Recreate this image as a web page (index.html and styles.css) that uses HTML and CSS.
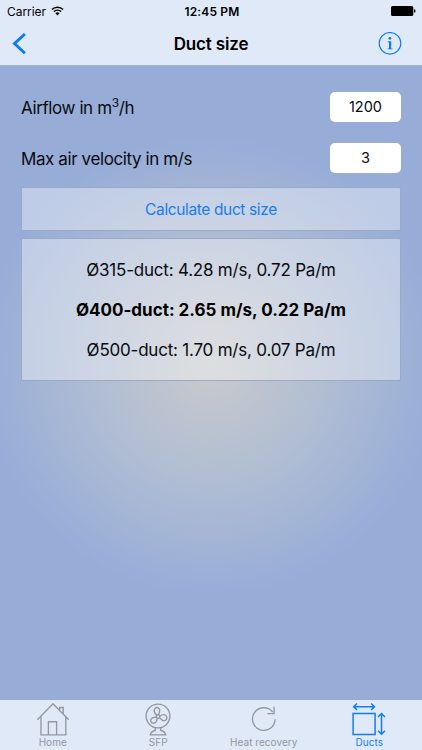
FILE: index.html
```html
<!DOCTYPE html>
<html lang="en">

<head>
    <meta charset="UTF-8">
    <meta name="viewport" content="width=device-width, initial-scale=1">
    <title>Duct size</title>
    <link rel="stylesheet" href="styles.css">
</head>

<body>

    <div class="app">
        <header class="header">
            <div class="status-bar">
                <div class="carrier">
                    <span>Carrier</span>
                    <svg class="wifi" viewBox="0 0 13 10" width="13" height="10">
                        <path d="M.9 3.5a8 8 0 0 1 11.2 0M2.9 5.6a5.2 5.2 0 0 1 7.2 0" fill="none" stroke="#000" stroke-width="1.5"/>
                        <path d="M6.5 9.4 4.4 7.3a3 3 0 0 1 4.2 0z"/>
                    </svg>
                </div>
                <div class="time">12:45 PM</div>
                <svg class="battery" viewBox="0 0 25 10" width="25" height="10">
                    <rect width="22.3" height="10" rx="1.6"/>
                    <path d="M23 3.2q1.6.3 1.6 1.8T23 6.8z"/>
                </svg>
            </div>
            <div class="nav-bar">
                <a href="#" class="back" aria-label="Back">
                    <svg viewBox="0 0 14 22" width="14" height="22">
                        <path d="M12.9 1 2.4 10.6l10.5 9.7" fill="none" stroke="currentColor" stroke-width="2.8"/>
                    </svg>
                </a>
                <h1 class="title">Duct size</h1>
                <a href="#" class="info" aria-label="Info">
                    <svg viewBox="0 0 24 24" width="24" height="24">
                        <circle cx="12" cy="11.3" r="10.8" fill="none" stroke="currentColor" stroke-width="1.1"/>
                        <circle cx="11.9" cy="6.3" r="1.4" fill="currentColor"/>
                        <path d="M9.7 9.3h3.5v7.1h1.4v.9H9.6v-.9H11v-6.2H9.7z" fill="currentColor"/>
                    </svg>
                </a>
            </div>
        </header>

        <main class="content">
            <div class="field">
                <label for="airflow">Airflow in m<sup>3</sup>/h</label>
                <input type="text" id="airflow" value="1200">
            </div>
            <div class="field">
                <label for="velocity">Max air velocity in m/s</label>
                <input type="text" id="velocity" value="3">
            </div>
            <button class="calculate">Calculate duct size</button>
            <div class="results">
                <div class="result">Ø315-duct: 4.28 m/s, 0.72 Pa/m</div>
                <div class="result best">Ø400-duct: 2.65 m/s, 0.22 Pa/m</div>
                <div class="result">Ø500-duct: 1.70 m/s, 0.07 Pa/m</div>
            </div>
        </main>

        <nav class="tab-bar">
            <a href="#" class="tab">
                <svg viewBox="0 0 36 36" width="36" height="36">
                    <path d="M2.4 18.8 18 2.8l15.7 16M6 15.2v18.6h24.8V15.2M13.4 33.8V20.7h8.2v13.1M24.7 8.7V6.5h3.5v6"/>
                </svg>
                <span>Home</span>
            </a>
            <a href="#" class="tab">
                <svg viewBox="0 0 36 36" width="36" height="36">
                    <circle cx="18" cy="15" r="11.9"/>
                    <circle cx="18" cy="15.5" r="1.8"/>
                    <path d="M16.6 14.2c-2.2-2.3-3.2-5-1.5-6.8 2-1.8 4.8-.4 4.6 2.4-.1 1.8-1 2.6-1.2 3.9M19.7 15.1c2.7-1.8 5.4-1.7 6.7.1 1.3 2.3-.4 4.8-2.9 4.4-2-.3-2.4-1.8-4-2.8M17.2 17.1c-.2 3-1.7 5.3-4 5.1-2.7-.3-3.3-3.3-1.3-4.9 1.5-1.2 2.9-.6 4.3-1.2M15.2 26.7v2.8c-2.8.6-4.6 2-4.9 4.4h15.4c-.3-2.4-2.1-3.8-4.9-4.4v-2.8"/>
                </svg>
                <span>SFP</span>
            </a>
            <a href="#" class="tab">
                <svg viewBox="0 0 36 36" width="36" height="36">
                    <path d="M29.1 18.2A11.3 11.3 0 1 1 26.8 11.2M28.1 5.7v6.9h-6.7"/>
                </svg>
                <span>Heat recovery</span>
            </a>
            <a href="#" class="tab active">
                <svg viewBox="0 0 36 36" width="36" height="36">
                    <path d="M2.1 12.5h22v21h-22zM2.7 5.7h20.8M6 2.5 2.7 5.7 6 8.9M20.2 2.5l3.3 3.2-3.3 3.2M30.5 12.5v20.8M27 16l3.5-3.5L34 16M27 29.8l3.5 3.5 3.5-3.5"/>
                </svg>
                <span>Ducts</span>
            </a>
        </nav>
    </div>

</body>

</html>
```

FILE: styles.css
```css
* {
    box-sizing: border-box;
}

body {
    margin: 0;
    font-family: Inter, "Liberation Sans", sans-serif;
    color: #080b10;
}

a {
    text-decoration: none;
}

.app {
    display: flex;
    flex-direction: column;
    height: 750px;
    background: radial-gradient(circle 230px at 211px 366px, #c9cacc 0%, #b0bdd3 50%, #97add8 100%);
}

.header {
    height: 66px;
    background: #e0e9f8;
    border-bottom: 1px solid #a1b2d3;
    color: #000;
}

.status-bar {
    display: grid;
    grid-template-columns: 1fr auto 1fr;
    align-items: center;
    height: 22px;
    padding: 0 6px 0 7px;
    font-size: 12px;
}

.carrier {
    display: flex;
    align-items: center;
    gap: 5px;
    height: 20px;
    letter-spacing: -0.05px;
}

.time {
    padding-left: 1px;
    font-weight: 600;
    letter-spacing: 0.15px;
}

.battery {
    justify-self: end;
}

.nav-bar {
    display: grid;
    grid-template-columns: 1fr auto 1fr;
    align-items: center;
    height: 43px;
    padding: 0 20px 0 12px;
}

.back,
.info {
    display: flex;
    color: #0a7bf5;
}

.info {
    justify-self: end;
}

.title {
    margin: 0 0 0 8px;
    font-size: 17px;
    font-weight: 600;
    line-height: 22px;
    letter-spacing: -0.15px;
}

.content {
    flex: 1;
    padding: 26px 21px 0;
}

.field {
    display: flex;
    align-items: center;
    justify-content: space-between;
    height: 30px;
    margin-bottom: 21px;
    font-size: 17px;
    letter-spacing: -0.4px;
}

.field label {
    padding-top: 1px;
}

.field sup {
    font-size: 12px;
    line-height: 0;
    vertical-align: 7px;
    font-feature-settings: "calt" 0;
}

.field input {
    width: 71px;
    height: 30px;
    padding: 0 0 2px;
    border: none;
    border-radius: 5px;
    background: #fff;
    color: #080b10;
    font-family: inherit;
    font-size: 14.5px;
    text-align: center;
}

.calculate {
    display: block;
    width: 100%;
    height: 44px;
    margin: -7px 0 7px;
    border: 1px solid #9aa9c4;
    border-radius: 2px;
    background: rgba(255, 255, 255, 0.38);
    color: #187df0;
    font-family: inherit;
    font-size: 15.5px;
    letter-spacing: -0.37px;
}

.results {
    height: 143px;
    padding-top: 11px;
    border: 1px solid #9aa9c4;
    border-radius: 2px;
    background: rgba(255, 255, 255, 0.38);
    text-align: center;
}

.result {
    font-size: 17px;
    line-height: 40px;
    letter-spacing: -0.21px;
}

.best {
    color: #000;
    font-weight: 700;
    letter-spacing: 0;
}

.tab-bar {
    display: grid;
    grid-template-columns: repeat(4, 1fr);
    height: 50px;
    background: #e0e9f8;
}

.tab {
    display: flex;
    flex-direction: column;
    align-items: center;
    padding-top: 1px;
    color: #93989f;
    font-size: 10px;
    line-height: 11px;
    letter-spacing: 0.05px;
}

.tab svg {
    fill: none;
    stroke: currentColor;
    stroke-width: 1.35;
}

.tab.active {
    color: #157df4;
}

.tab.active svg {
    stroke-width: 1.5;
}
```
